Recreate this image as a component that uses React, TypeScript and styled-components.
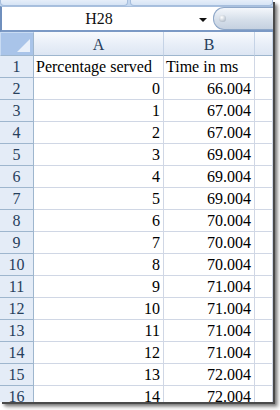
import React from "react";
import styled, { createGlobalStyle } from "styled-components";

const Global = createGlobalStyle`
  html, body { margin: 0; padding: 0; background: #ffffff; }
  body { width: 280px; height: 410px; overflow: hidden; }
`;

const Frame = styled.div`
  width: 273px;
  height: 402px;
  overflow: hidden;
  background: #ffffff;
  box-shadow: 2px 2px 0 #4a4a4a, 4px 4px 3px rgba(0, 0, 0, 0.45), 6px 6px 4px rgba(0, 0, 0, 0.15);
  display: flex;
  flex-direction: column;
  font-family: "Liberation Serif", "Times New Roman", serif;
`;

const RibbonEdge = styled.div`
  height: 6px;
  display: flex;
  gap: 2px;
  background: #c4d7ef;
`;

const RibbonTab = styled.div<{ $w: string }>`
  flex: ${(p) => p.$w};
  height: 5px;
  background: linear-gradient(#e6eef9, #d6e4f5);
  border: 1px solid #a6bedd;
  border-top: none;
  border-radius: 0 0 4px 4px;
`;

const FormulaBar = styled.div`
  height: 23px;
  display: flex;
  align-items: center;
  background: #ffffff;
  border-top: 1px solid #a9c0de;
  border-left: 2px solid #6f8fbd;
  border-bottom: 2px solid #7b99c5;
`;

const BarUnderline = styled.div`
  height: 1px;
  background: #d9e4f2;
`;

const NameBox = styled.div`
  width: 194px;
  text-align: center;
  font-size: 16px;
  line-height: 23px;
  color: #111;
`;

const DropArrow = styled.div`
  width: 0;
  height: 0;
  margin-left: 3px;
  margin-top: 2px;
  border-left: 4px solid transparent;
  border-right: 4px solid transparent;
  border-top: 4px solid #111;
`;

const Handle = styled.div`
  margin-left: 6px;
  flex: 1;
  height: 21px;
  border: 1px solid #8ea7c8;
  border-right: none;
  border-radius: 11px 0 0 11px;
  background: linear-gradient(#f4f7fb, #d6dfea 55%, #c5d1e0);
  display: flex;
  align-items: center;
  padding-left: 5px;
`;

const Knob = styled.div`
  width: 7px;
  height: 7px;
  border-radius: 50%;
  background: radial-gradient(circle at 40% 35%, #ffffff, #b7c1cd 70%, #9aa6b4);
`;

const Grid = styled.div`
  display: grid;
  grid-template-columns: 34px 130px 91px 1fr;
  grid-auto-rows: 22px;
  grid-template-rows: 24px;
`;

const Corner = styled.div`
  position: relative;
  box-sizing: border-box;
  background: #a9c4e9;
  border: 1px solid #c8dbf3;
  border-right: 1px solid #9eb6ce;
  border-bottom: 1px solid #9eb6ce;
`;

const CornerTri = styled.div`
  position: absolute;
  right: 3px;
  bottom: 3px;
  width: 0;
  height: 0;
  border-left: 13px solid transparent;
  border-bottom: 13px solid #e9f0fa;
`;

const ColHead = styled.div`
  box-sizing: border-box;
  background: linear-gradient(#f8fafd, #e9eff8 50%, #dde6f3);
  border-right: 1px solid #c5d3e6;
  border-bottom: 1px solid #9eb6ce;
  display: flex;
  align-items: center;
  justify-content: center;
  font-size: 16px;
  color: #27405c;
  padding-top: 2px;
`;

const RowHead = styled.div`
  box-sizing: border-box;
  background: #e4ecf7;
  border-right: 1px solid #9eb6ce;
  border-bottom: 1px solid #9eb6ce;
  display: flex;
  align-items: flex-end;
  justify-content: center;
  font-size: 16px;
  color: #27405c;
  padding-bottom: 1px;
`;

const Cell = styled.div<{ $num?: boolean }>`
  box-sizing: border-box;
  border-right: 1px solid #d0d7e5;
  border-bottom: 1px solid #d0d7e5;
  display: flex;
  align-items: flex-end;
  justify-content: ${(p) => (p.$num ? "flex-end" : "flex-start")};
  padding: 0 ${(p) => (p.$num ? "3px" : "0")} 1px ${(p) => (p.$num ? "0" : "2px")};
  font-size: 16px;
  color: #000;
  white-space: nowrap;
  overflow: hidden;
`;

const times = [
  "66.004", "67.004", "67.004", "69.004", "69.004", "69.004", "70.004", "70.004",
  "70.004", "71.004", "71.004", "71.004", "71.004", "72.004", "72.004",
];

export default function App() {
  return (
    <>
      <Global />
      <Frame>
        <RibbonEdge>
          <RibbonTab $w="0 0 126px" />
          <RibbonTab $w="1" />
        </RibbonEdge>
        <FormulaBar>
          <NameBox>H28</NameBox>
          <DropArrow />
          <Handle>
            <Knob />
          </Handle>
        </FormulaBar>
        <BarUnderline />
        <Grid>
          <Corner>
            <CornerTri />
          </Corner>
          <ColHead>A</ColHead>
          <ColHead>B</ColHead>
          <ColHead />
          <RowHead>1</RowHead>
          <Cell>Percentage served</Cell>
          <Cell>Time in ms</Cell>
          <Cell />
          {times.map((t, i) => (
            <React.Fragment key={i}>
              <RowHead>{i + 2}</RowHead>
              <Cell $num>{i}</Cell>
              <Cell $num>{t}</Cell>
              <Cell />
            </React.Fragment>
          ))}
        </Grid>
      </Frame>
    </>
  );
}
